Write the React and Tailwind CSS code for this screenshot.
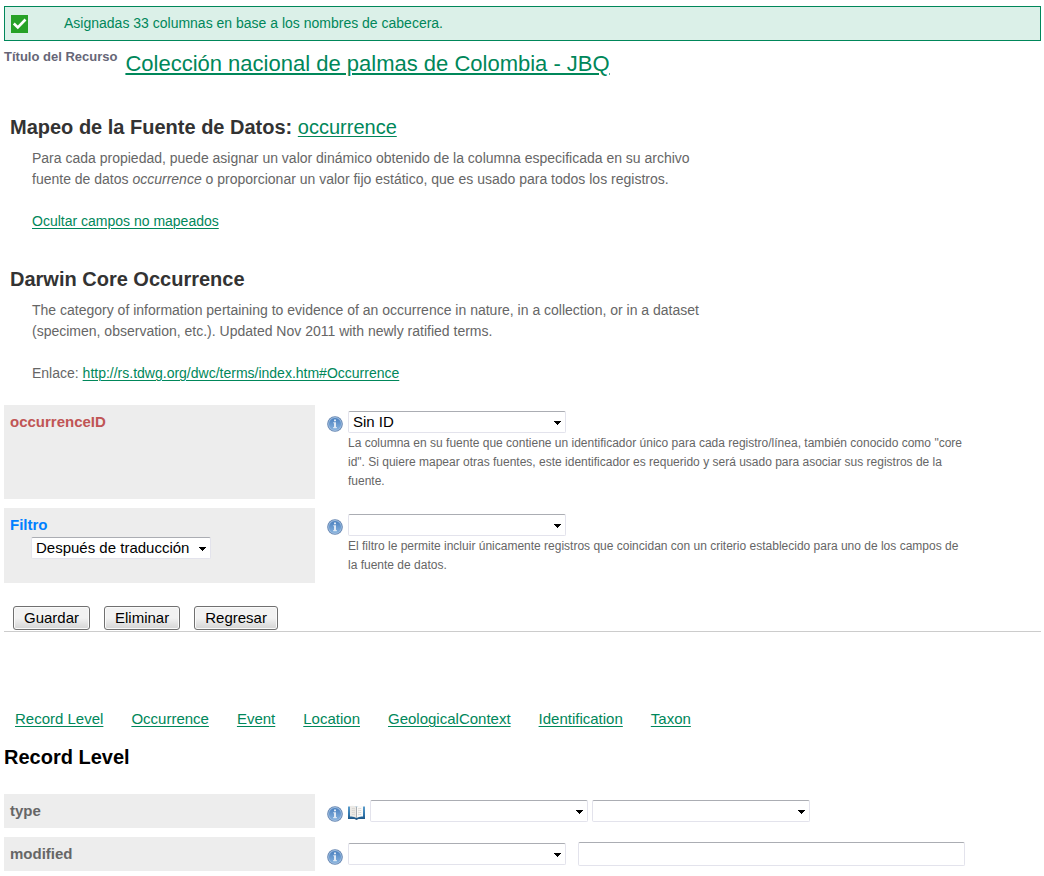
const LINK = "text-[#00875a] underline decoration-1 underline-offset-2";

function InfoIcon() {
  return (
    <svg className="mt-[5px] h-4 w-4 shrink-0" viewBox="0 0 16 16" aria-hidden="true">
      <defs>
        <linearGradient id="infoFill" x1="0" y1="0" x2="0" y2="1">
          <stop offset="0" stopColor="#4a80bf" />
          <stop offset="1" stopColor="#86b2de" />
        </linearGradient>
      </defs>
      <circle cx="8" cy="8" r="7.8" fill="#6384b0" />
      <circle cx="8" cy="8" r="6.9" fill="#9dbcdf" />
      <circle cx="8" cy="8" r="6" fill="url(#infoFill)" />
      <path d="M7 3.500h2v1.700H7zM6.300 6.200H9v4.900h.8v1.100H6.200v-1.100H7V7.300h-.7z" fill="#dfe9f4" />
    </svg>
  );
}

function BookIcon() {
  return (
    <svg className="mt-1 h-4 w-[17px] shrink-0" viewBox="0 0 17 16" aria-hidden="true">
      <defs>
        <linearGradient id="bookCover" x1="0" y1="0" x2="0" y2="1">
          <stop offset="0" stopColor="#5b9dcc" />
          <stop offset="0.6" stopColor="#2f76ad" />
          <stop offset="1" stopColor="#1a4f7d" />
        </linearGradient>
      </defs>
      <path d="M0 1.500h17v12.500H10.500l-2 1-2-1H0z" fill="url(#bookCover)" />
      <path d="M2 1Q5.600.200 8.500 1.800v11.200Q5.600 11 2 11.500z" fill="#eceae6" />
      <path d="M15 1Q11.400.200 8.500 1.800v11.200Q11.400 11 15 11.500z" fill="#fbfaf8" />
      <path d="M8.500 1.800v11.200" stroke="#a3a6aa" strokeWidth=".9" />
      <path d="M3.800 3.500q1.700-.3 3.200.4M3.800 5.500q1.700-.3 3.200.4M3.800 7.500q1.700-.3 3.200.4M3.800 9.500q1.700-.3 3.200.4M10 3.900q1.500-.7 3.200-.4M10 5.900q1.500-.7 3.200-.4M10 7.900q1.500-.7 3.200-.4M10 9.900q1.500-.7 3.200-.4" stroke="#cfcdc9" strokeWidth=".7" fill="none" />
    </svg>
  );
}

function Select({ id, label, width = "w-[218px]", options = [""] }) {
  return (
    <span className={`relative inline-block shrink-0 ${width}`}>
      <select
        id={id}
        aria-label={label}
        className="block h-[22px] w-full appearance-none rounded-[2px] border border-[#e3e3ec] border-t-[#abadb3] bg-white pr-5 pl-1 text-[15px] leading-5 text-black"
      >
        {options.map((o) => (
          <option key={o}>{o}</option>
        ))}
      </select>
      <svg className="pointer-events-none absolute top-[10px] right-[5px] h-1 w-[7px]" viewBox="0 0 7 4" shapeRendering="crispEdges" aria-hidden="true">
        <path d="M0 0h7v1H0zM1 1h5v1H1zM2 2h3v1H2zM3 3h1v1H3z" />
      </svg>
    </span>
  );
}

function Row({ name, id, color = "text-[#666666]", extra, children }) {
  return (
    <div className="flex">
      <div className="w-[311px] shrink-0 bg-[#ededed] px-[6px] pt-[6px]">
        <label htmlFor={id} className={`block text-[15px] leading-[22px] font-bold ${color}`}>
          {name}
        </label>
        {extra}
      </div>
      <div className="min-w-0 grow py-[5px] pl-3">{children}</div>
    </div>
  );
}

function HelpField({ children, help }) {
  return (
    <div className="flex gap-[5px] pt-px pb-[3px]">
      <InfoIcon />
      <div className="min-w-0">
        {children}
        <p className="mt-px max-w-[618px] text-[12px] leading-[19px] text-[#666666]">{help}</p>
      </div>
    </div>
  );
}

function Button({ children }) {
  return (
    <button
      type="button"
      className="h-6 rounded-[3px] border border-[#707070] bg-linear-to-b from-[#f2f2f2] from-50% to-[#d4d4d4] to-100% px-[10px] text-[15px] leading-5 text-black shadow-[inset_0_0_0_1px_#fafafa]"
    >
      {children}
    </button>
  );
}

const GROUPS = ["Record Level", "Occurrence", "Event", "Location", "GeologicalContext", "Identification", "Taxon"];

export default function App() {
  return (
    <main className="bg-white pt-[6px] pr-[3px] pb-1 pl-1 font-['Liberation_Sans',Arial,sans-serif] text-[14px] leading-[21px] text-[#666666]">
      <div role="status" className="flex h-[35px] items-center border border-[#00875a] bg-[#dbf0e8] pl-[6px] text-[#00875a]">
        <svg className="mr-9 h-[18px] w-[17px] shrink-0" viewBox="0 0 17 18" aria-hidden="true">
          <path d="M0 0h17v18H0z" fill="#27a127" />
          <path d="M2.800 8.500l4 4L14.500 4.500" fill="none" stroke="#fff" strokeWidth="2.600" />
        </svg>
        <p>Asignadas 33 columnas en base a los nombres de cabecera.</p>
      </div>

      <div className="mt-2 flex items-start gap-2">
        <span className="text-[13px] leading-4 font-bold text-[#666677]">Título del Recurso</span>
        <a href="#recurso" className={`text-[22px] leading-[30px] ${LINK} decoration-2`}>
          Colección nacional de palmas de Colombia - JBQ
        </a>
      </div>

      <section className="mt-[34px]">
        <h2 className="pl-[6px] text-[20px] leading-7 font-bold text-[#333333]">
          Mapeo de la Fuente de Datos: <a href="#occurrence" className={`font-normal ${LINK}`}>occurrence</a>
        </h2>
        <div className="mt-[7px] ml-7 max-w-[700px]">
          <p>
            Para cada propiedad, puede asignar un valor dinámico obtenido de la columna especificada en su archivo
            fuente de datos <em>occurrence</em> o proporcionar un valor fijo estático, que es usado para todos los registros.
          </p>
          <p className="mt-[21px]">
            <a href="#ocultar" className={LINK}>Ocultar campos no mapeados</a>
          </p>
        </div>
      </section>

      <section className="mt-[33px]">
        <h2 className="pl-[6px] text-[20px] leading-7 font-bold text-[#333333]">Darwin Core Occurrence</h2>
        <div className="mt-[7px] ml-7 max-w-[700px]">
          <p>
            The category of information pertaining to evidence of an occurrence in nature, in a collection, or in a dataset
            (specimen, observation, etc.). Updated Nov 2011 with newly ratified terms.
          </p>
          <p className="mt-[21px]">
            Enlace: <a href="http://rs.tdwg.org/dwc/terms/index.htm#Occurrence" className={LINK}>http://rs.tdwg.org/dwc/terms/index.htm#Occurrence</a>
          </p>
        </div>
      </section>

      <form>
        <div className="mt-[21px] flex flex-col gap-[9px]">
          <Row name="occurrenceID" id="occurrence-id" color="text-[#c05555]">
            <HelpField help={'La columna en su fuente que contiene un identificador único para cada registro/línea, también conocido como "core id". Si quiere mapear otras fuentes, este identificador es requerido y será usado para asociar sus registros de la fuente.'}>
              <Select id="occurrence-id" options={["Sin ID"]} />
            </HelpField>
          </Row>
          <Row
            name="Filtro"
            id="filtro"
            color="text-[#0080ff]"
            extra={
              <div className="mt-px ml-[21px]">
                <Select label="Momento del filtro" width="w-[180px]" options={["Después de traducción"]} />
              </div>
            }
          >
            <HelpField help="El filtro le permite incluir únicamente registros que coincidan con un criterio establecido para uno de los campos de la fuente de datos.">
              <Select id="filtro" />
            </HelpField>
          </Row>
        </div>

        <div className="mt-[23px] flex gap-[14px] border-b border-[#cccccc] pb-px pl-[9px]">
          <Button>Guardar</Button>
          <Button>Eliminar</Button>
          <Button>Regresar</Button>
        </div>

        <nav className="mt-[76px] flex flex-wrap gap-x-7 pl-[11px] text-[15px] leading-[22px]">
          {GROUPS.map((g) => (
            <a key={g} href={`#${g.replace(" ", "")}`} className={LINK}>{g}</a>
          ))}
        </nav>

        <h2 id="RecordLevel" className="mt-[13px] text-[20px] leading-7 font-bold text-black">Record Level</h2>
        <div className="mt-[23px] flex flex-col gap-[9px]">
          <Row name="type" id="type">
            <div className="flex h-6 items-center gap-[5px]">
              <InfoIcon />
              <BookIcon />
              <div className="flex gap-1">
                <Select id="type" />
                <Select label="type, valor fijo" />
              </div>
            </div>
          </Row>
          <Row name="modified" id="modified">
            <div className="flex h-6 items-center gap-[5px]">
              <InfoIcon />
              <div className="flex min-w-0 grow items-center gap-3">
                <Select id="modified" />
                <input
                  type="text"
                  aria-label="modified, valor fijo"
                  className="h-6 w-full max-w-[387px] min-w-0 rounded-[2px] border border-[#e3e3ec] border-t-[#abadb3] bg-white px-1 text-[15px] text-black"
                />
              </div>
            </div>
          </Row>
        </div>
      </form>
    </main>
  );
}
